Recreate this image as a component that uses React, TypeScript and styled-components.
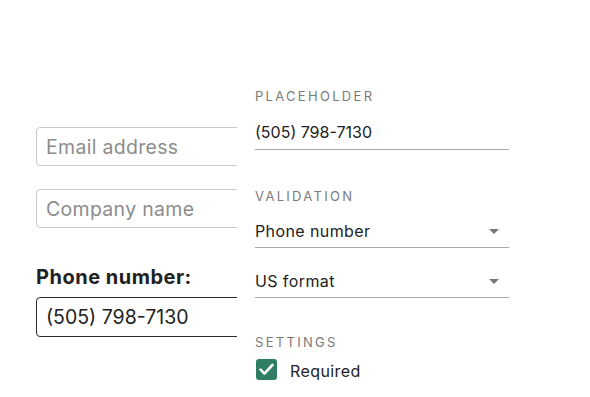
import React from "react";
import styled, { createGlobalStyle } from "styled-components";

const Global = createGlobalStyle`
  html, body { margin: 0; padding: 0; background: #fff; }
  body { font-family: Inter, "Noto Sans", sans-serif; -webkit-font-smoothing: antialiased; }
  * { box-sizing: border-box; }
`;

const Page = styled.div`
  width: 590px;
  height: 397px;
  display: flex;
  overflow: hidden;
  background: #fff;
`;

const FormColumn = styled.div`
  width: 237px;
  flex: none;
  overflow: hidden;
  padding: 127px 0 0 36px;
  display: flex;
  flex-direction: column;
`;

const TextInput = styled.div<{ $filled?: boolean }>`
  width: 320px;
  height: ${(p) => (p.$filled ? 40 : 39)}px;
  flex: none;
  border: 1px solid ${(p) => (p.$filled ? "#2b2b2b" : "#c9c9c9")};
  border-radius: 4px;
  padding: 0 9px;
  display: flex;
  align-items: center;
  font-size: 19.5px;
  letter-spacing: ${(p) => (p.$filled ? 0 : 0.3)}px;
  color: ${(p) => (p.$filled ? "#222" : "#8c8c8c")};
  margin-bottom: 23px;
`;

const FieldLabel = styled.div`
  font-size: 20px;
  line-height: 24px;
  font-weight: 700;
  letter-spacing: 0.5px;
  color: #222;
  margin-top: 14px;
  margin-bottom: 8px;
`;

const Panel = styled.div`
  flex: 1;
  background: #fff;
  padding: 88px 0 0 18px;
  display: flex;
  flex-direction: column;
`;

const SectionLabel = styled.div<{ $gapBelow: number; $gapAbove?: number }>`
  font-size: 13px;
  line-height: 16px;
  letter-spacing: 2.3px;
  color: #7a7a7a;
  text-transform: uppercase;
  margin-top: ${(p) => p.$gapAbove ?? 0}px;
  margin-bottom: ${(p) => p.$gapBelow}px;
`;

const Field = styled.div<{ $gapAbove?: number; $pad?: number }>`
  width: 254px;
  font-size: 16px;
  line-height: 20px;
  color: #222;
  padding-bottom: ${(p) => p.$pad ?? 6}px;
  border-bottom: 1px solid #a9a9a9;
  margin-top: ${(p) => p.$gapAbove ?? 0}px;
  display: flex;
  align-items: center;
  justify-content: space-between;
`;

const Value = styled.span<{ $wide?: boolean }>`
  letter-spacing: ${(p) => (p.$wide ? 0.4 : 0)}px;
`;

const Caret = styled.span`
  width: 0;
  height: 0;
  border-left: 5.5px solid transparent;
  border-right: 5.5px solid transparent;
  border-top: 5px solid #777;
  margin-right: 10px;
  margin-top: 1px;
`;

const CheckRow = styled.label`
  display: flex;
  align-items: flex-start;
  gap: 13px;
  margin-left: 1px;
`;

const CheckBox = styled.span`
  width: 21px;
  height: 21px;
  border-radius: 3px;
  background: #2f7d63;
  display: flex;
  align-items: center;
  justify-content: center;
`;

const CheckText = styled.span`
  font-size: 16px;
  line-height: 21px;
  padding-top: 2px;
  letter-spacing: 0.4px;
  color: #222;
`;

export default function App() {
  return (
    <Page>
      <Global />
      <FormColumn>
        <TextInput>Email address</TextInput>
        <TextInput>Company name</TextInput>
        <FieldLabel>Phone number:</FieldLabel>
        <TextInput $filled>(505) 798-7130</TextInput>
      </FormColumn>
      <Panel>
        <SectionLabel $gapBelow={18}>Placeholder</SectionLabel>
        <Field $pad={7}>
          <Value>(505) 798-7130</Value>
        </Field>
        <SectionLabel $gapAbove={38} $gapBelow={17}>Validation</SectionLabel>
        <Field>
          <Value $wide>Phone number</Value>
          <Caret />
        </Field>
        <Field $gapAbove={23}>
          <Value $wide>US format</Value>
          <Caret />
        </Field>
        <SectionLabel $gapAbove={36} $gapBelow={9}>Settings</SectionLabel>
        <CheckRow>
          <CheckBox>
            <svg width="15" height="13" viewBox="0 0 15 13" fill="none">
              <path d="M1.6 6.6 L5.4 10.6 L13.4 2" stroke="#fff" strokeWidth="2.6" strokeLinecap="round" strokeLinejoin="round" />
            </svg>
          </CheckBox>
          <CheckText>Required</CheckText>
        </CheckRow>
      </Panel>
    </Page>
  );
}
